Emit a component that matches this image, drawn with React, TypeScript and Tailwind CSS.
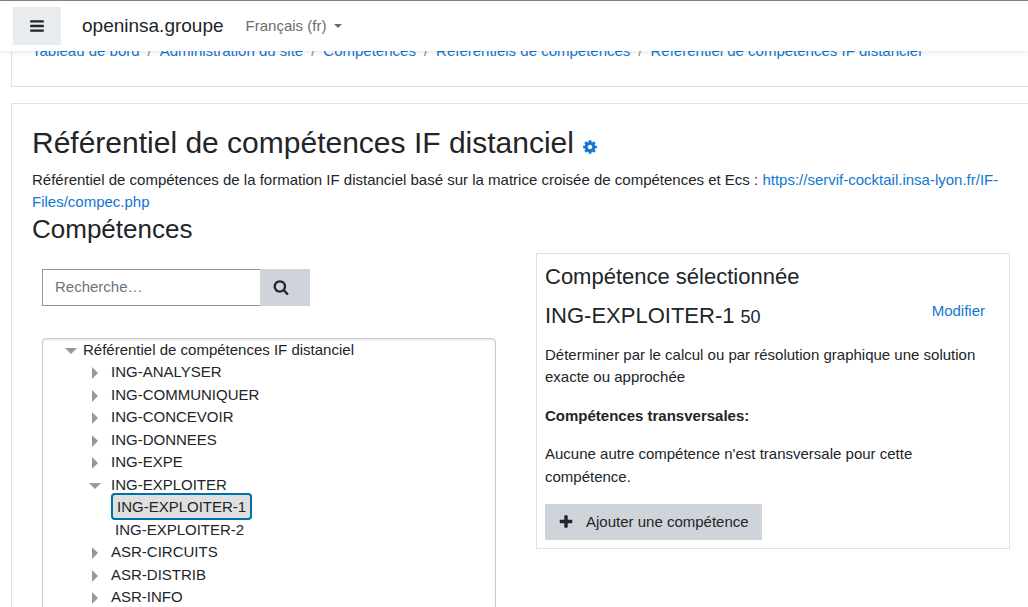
import React, { useState } from "react";

const iconPaths = {
  bars: "M1664 1344v128q0 26-19 45t-45 19h-1408q-26 0-45-19t-19-45v-128q0-26 19-45t45-19h1408q26 0 45 19t19 45zm0-512v128q0 26-19 45t-45 19h-1408q-26 0-45-19t-19-45v-128q0-26 19-45t45-19h1408q26 0 45 19t19 45zm0-512v128q0 26-19 45t-45 19h-1408q-26 0-45-19t-19-45v-128q0-26 19-45t45-19h1408q26 0 45 19t19 45z",
  cog: "M1152 896q0-106-75-181t-181-75-181 75-75 181 75 181 181 75 181-75 75-181zm512-109v222q0 12-8 23t-20 13l-185 28q-19 54-39 91 35 50 107 138 10 12 10 25t-9 23q-27 37-99 108t-94 71q-12 0-26-9l-138-108q-44 23-91 38-16 136-29 186-7 28-36 28h-222q-14 0-24.5-8.5t-11.5-21.5l-28-184q-49-16-90-37l-141 107q-10 9-25 9-14 0-25-11-126-114-165-168-7-10-7-23 0-12 8-23 15-21 51-66.5t54-70.5q-27-50-41-99l-183-27q-13-2-21-12.5t-8-23.5v-222q0-12 8-23t19-13l186-28q14-46 39-92-40-57-107-138-10-12-10-24 0-10 9-23 26-36 98.5-107.5t94.5-71.5q13 0 26 10l138 107q44-23 91-38 16-136 29-186 7-28 36-28h222q14 0 24.5 8.5t11.5 21.5l28 184q49 16 90 37l142-107q9-9 24-9 13 0 25 10 129 119 165 170 7 8 7 22 0 12-8 23-15 21-51 66.5t-54 70.5q26 50 41 98l183 28q13 2 21 12.5t8 23.5z",
  search: "M1216 832q0-185-131.5-316.5t-316.5-131.5-316.5 131.5-131.5 316.5 131.5 316.5 316.5 131.5 316.5-131.5 131.5-316.5zm512 832q0 52-38 90t-90 38q-54 0-90-38l-343-342q-179 124-399 124-143 0-273.5-55.5t-225-150-150-225-55.5-273.5 55.5-273.5 150-225 225-150 273.5-55.5 273.5 55.5 225 150 150 225 55.5 273.5q0 220-124 399l343 343q37 37 37 90z",
  plus: "M1600 736v192q0 40-28 68t-68 28h-416v416q0 40-28 68t-68 28h-192q-40 0-68-28t-28-68v-416h-416q-40 0-68-28t-28-68v-192q0-40 28-68t68-28h416v-416q0-40 28-68t68-28h192q40 0 68 28t28 68v416h416q40 0 68 28t28 68z",
};

const Icon: React.FC<{ name: keyof typeof iconPaths }> = ({ name }) => (
  <svg viewBox="0 0 1792 1792" className="w-4 h-4 shrink-0" fill="currentColor" aria-hidden="true">
    <path d={iconPaths[name]} />
  </svg>
);

const Arrow: React.FC<{ open?: boolean }> = ({ open }) => (
  <svg viewBox="0 0 12 12" className="w-3 h-3 mt-1.5 shrink-0" fill="#999" aria-hidden="true">
    <path d={open ? "M0 3H12L6 9Z" : "M3 0L9 6L3 12Z"} />
  </svg>
);

const crumbs = [
  "Tableau de bord",
  "Administration du site",
  "Compétences",
  "Référentiels de compétences",
  "Référentiel de compétences IF distanciel",
];

type Competency = { name: string; children?: string[] };

const competencies: Competency[] = [
  { name: "ING-ANALYSER" },
  { name: "ING-COMMUNIQUER" },
  { name: "ING-CONCEVOIR" },
  { name: "ING-DONNEES" },
  { name: "ING-EXPE" },
  { name: "ING-EXPLOITER", children: ["ING-EXPLOITER-1", "ING-EXPLOITER-2"] },
  { name: "ASR-CIRCUITS" },
  { name: "ASR-DISTRIB" },
  { name: "ASR-INFO" },
];

const Navbar = () => (
  <header className="relative z-10 shrink-0 flex items-center bg-white border-t border-t-[#808080] px-[13px] py-1.5 shadow-[0_2px_4px_rgba(0,0,0,0.08)]">
    <button
      type="button"
      aria-label="Panneau latéral"
      className="flex items-center justify-center w-12 h-[38px] bg-[#e9ecef]"
    >
      <Icon name="bars" />
    </button>
    <a href="#" className="ml-[21px] text-[19px]">openinsa.groupe</a>
    <button type="button" className="ml-[22px] flex items-center gap-2 text-[#6c6c6c]">
      Français (fr)
      <svg viewBox="0 0 8 4" className="w-2 h-1" fill="currentColor" aria-hidden="true">
        <path d="M0 0H8L4 4Z" />
      </svg>
    </button>
  </header>
);

const Tree: React.FC<{ selected: string; onSelect: (name: string) => void }> = ({ selected, onSelect }) => (
  <div className="mt-8 h-80 rounded border border-[#ccc] pl-[22px] shadow-[inset_0_1px_2px_rgba(0,0,0,0.1)]">
    <ul role="tree">
      <li role="treeitem" aria-expanded="true">
        <div className="flex gap-1.5">
          <Arrow open />
          <span>Référentiel de compétences IF distanciel</span>
        </div>
        <ul role="group" className="pl-6">
          {competencies.map((c) => (
            <li key={c.name} role="treeitem" aria-expanded={!!c.children}>
              <div className="flex gap-[10px]">
                <Arrow open={!!c.children} />
                <span>{c.name}</span>
              </div>
              {c.children && (
                <ul role="group" className="pl-[22px]">
                  {c.children.map((name) => (
                    <li key={name} role="treeitem" aria-selected={name === selected} onClick={() => onSelect(name)}>
                      <span
                        className={
                          name === selected
                            ? "px-1 py-[3px] border-2 border-[#0070a8] rounded bg-[#dfdfdf]"
                            : "px-1"
                        }
                      >
                        {name}
                      </span>
                    </li>
                  ))}
                </ul>
              )}
            </li>
          ))}
        </ul>
      </li>
    </ul>
  </div>
);

const App: React.FC = () => {
  const [query, setQuery] = useState("");
  const [selected, setSelected] = useState("ING-EXPLOITER-1");

  return (
    <div className="h-screen flex flex-col overflow-hidden bg-white text-[#212529] text-[15px] leading-normal font-['Liberation_Sans',Arial,sans-serif]">
      <Navbar />
      <main className="flex-1 min-h-0 overflow-hidden pl-[11px]">
        {/* page is scrolled: the breadcrumb slides under the navbar */}
        <nav aria-label="Fil d'Ariane" className="-mt-8 border border-r-0 border-[#dee2e6] pt-5 pb-[23px] px-5">
          <ol className="flex whitespace-nowrap">
            {crumbs.map((crumb, i) => (
              <li key={crumb}>
                {i > 0 && <span className="px-2 text-[#868e96]">/</span>}
                <a href="#" className="text-[#1177d1]">{crumb}</a>
              </li>
            ))}
          </ol>
        </nav>

        <section className="mt-4 border border-r-0 border-[#dee2e6] pl-5 pr-[18px] pt-[21px]">
          <h2 className="flex items-center gap-2 text-[30px] leading-9 mb-2">
            Référentiel de compétences IF distanciel
            <a href="#" aria-label="Modifier le référentiel" className="mt-2 text-[#1177d1]">
              <Icon name="cog" />
            </a>
          </h2>
          <p>
            Référentiel de compétences de la formation IF distanciel basé sur la matrice croisée de compétences et Ecs :{" "}
            <a href="#" className="text-[#1177d1]">https://servif-cocktail.insa-lyon.fr/IF-Files/compec.php</a>
          </p>
          <h3 className="text-[26px] leading-[30px] mb-[9px]">Compétences</h3>

          <div className="grid grid-cols-2 gap-[30px] items-start">
            <div className="px-[10px] pt-4">
              <form className="flex h-[37px]" onSubmit={(e) => e.preventDefault()}>
                <input
                  type="text"
                  aria-label="Recherche"
                  placeholder="Recherche…"
                  value={query}
                  onChange={(e) => setQuery(e.target.value)}
                  className="w-[218px] px-3 border border-r-0 border-[#8f959e] placeholder:text-[#6c757d] focus:outline-none"
                />
                <button type="submit" aria-label="Rechercher" className="flex items-center w-[50px] pl-[13px] bg-[#ced4da]">
                  <Icon name="search" />
                </button>
              </form>
              <Tree selected={selected} onSelect={setSelected} />
            </div>

            <div className="border border-[#dee2e6] p-2">
              <h4 className="text-[22px] leading-[30px] mb-2">Compétence sélectionnée</h4>
              <div className="flex justify-between items-start mb-[11px]">
                <h5 className="text-[22px] leading-8">
                  {selected} <small className="text-[18px]">50</small>
                </h5>
                <a href="#" className="mr-4 text-[#1177d1]">Modifier</a>
              </div>
              <p className="mb-4">
                Déterminer par le calcul ou par résolution graphique une solution exacte ou approchée
              </p>
              <p className="mb-4 font-bold">Compétences transversales:</p>
              <p className="mb-4">Aucune autre compétence n'est transversale pour cette compétence.</p>
              <button type="button" className="flex items-center gap-3 h-9 px-[13px] bg-[#ced4da]">
                <Icon name="plus" />
                Ajouter une compétence
              </button>
            </div>
          </div>
        </section>
      </main>
    </div>
  );
};

export default App;
